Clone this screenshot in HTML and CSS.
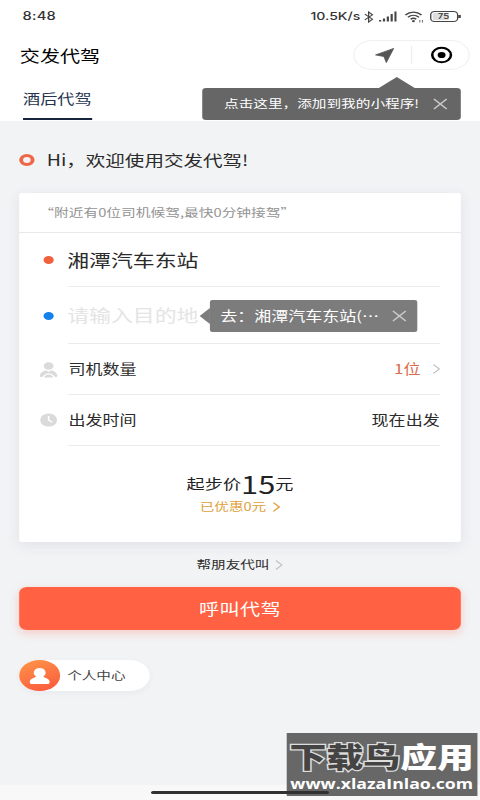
FILE: index.html
```html
<!DOCTYPE html>
<html lang="zh-CN">
<head>
<meta charset="utf-8">
<title>交发代驾</title>
<link rel="stylesheet" href="styles.css">
</head>
<body>
<div class="screen">
  <header class="top">
    <div class="status">
      <span class="clock">8:48</span>
      <div class="status-right">
        <span class="speed">10.5K/s</span>
        <svg class="bt" viewBox="0 0 8 12"><path d="M1 3.2l6 5L4 11V1l3 2.8-6 5"/></svg>
        <svg class="signal" viewBox="0 0 14 11"><path d="M1 9v1.500M4 7.500v3M7 5.500v5M10 3v7.500M13 .5v10"/></svg>
        <svg class="wifi" viewBox="0 0 15 12"><path d="M.7 4C4.500.2 9.500.2 13.300 4M2.700 6.200c2.600-2.500 6-2.500 8.600 0M4.800 8.300c1.400-1.300 3-1.300 4.400 0"/><circle cx="7" cy="10.200" r="1.100"/><path class="thin" d="M12 9v2.500M14 9v2.500"/></svg>
        <span class="battery">75</span>
      </div>
    </div>
    <div class="nav">
      <h1>交发代驾</h1>
      <div class="capsule">
        <svg class="arrow" viewBox="0 0 15 15"><path d="M.4 6.900L14.600.4 8.800 14.600 6.900 8.500z"/></svg>
        <i class="split"></i>
        <svg class="target" viewBox="0 0 18 18"><circle class="ring" cx="9" cy="9" r="7.300"/><circle cx="9" cy="9" r="3.100"/></svg>
      </div>
    </div>
    <div class="tabs"><span class="tab">酒后代驾</span></div>
    <div class="tip"><span>点击这里，添加到我的小程序!</span><svg class="x" viewBox="0 0 12 12"><path d="M1 1l10 10M11 1L1 11"/></svg></div>
  </header>

  <main>
    <div class="hello"><i class="ring-dot"></i><span>Hi，欢迎使用交发代驾!</span></div>
    <section class="card">
      <p class="notice">“附近有0位司机候驾,最快0分钟接驾”</p>
      <div class="row from"><i class="dot"></i><div class="cell big">湘潭汽车东站</div></div>
      <div class="row to"><i class="dot blue"></i><div class="cell big hint">请输入目的地</div>
        <div class="dest"><span>去：湘潭汽车东站(…</span><svg class="x" viewBox="0 0 12 12"><path d="M1 1l10 10M11 1L1 11"/></svg></div>
      </div>
      <div class="row count">
        <svg class="ico" viewBox="0 0 14 16"><circle cx="7" cy="4" r="3.800"/><path d="M0 13.500C1 10 3 8.500 5 8.500l2 1.300 2-1.300c2 0 4 1.500 5 5 .2 1.500-1.400 2-2.300 1C10 12 8.500 11.300 7 11.300s-3 .7-4.700 3.200c-.9 1-2.500.5-2.300-1z"/><path d="M3.500 15.500c.5-4 6.500-4 7 0z"/></svg>
        <div class="cell"><span>司机数量</span><span class="num">1位</span><svg class="chev" viewBox="0 0 6 10"><path d="M.6.6L5.200 5 .6 9.400"/></svg></div>
      </div>
      <div class="row time">
        <svg class="ico clock-ico" viewBox="0 0 14 14"><circle cx="7" cy="7" r="6.600"/><path d="M7 3v4l2.800 2.200"/></svg>
        <div class="cell"><span>出发时间</span><span class="now">现在出发</span></div>
      </div>
      <div class="price"><span>起步价</span><b>15</b><span>元</span></div>
      <div class="saved"><span>已优惠0元</span><svg class="chev" viewBox="0 0 6 10"><path d="M.6.6L5.200 5 .6 9.400"/></svg></div>
    </section>
    <div class="friend"><span>帮朋友代叫</span><svg class="chev" viewBox="0 0 6 10"><path d="M.6.6L5.200 5 .6 9.400"/></svg></div>
    <button class="call">呼叫代驾</button>
    <div class="me">
      <span class="avatar"><svg viewBox="0 0 16 16"><path d="M8 0a4.700 4.700 0 0 1 2.800 8.400c.2.900 4.700 1.800 5 5.300.1 1.400-.6 2.300-2 2.300H2.200c-1.400 0-2.100-.9-2-2.300.3-3.500 4.800-4.400 5-5.300A4.700 4.700 0 0 1 8 0z"/></svg></span>
      <span>个人中心</span>
    </div>
  </main>
  <div class="mark">
    <div class="mark-name"><span class="dark">下载鸟</span><span>应用</span></div>
    <div class="mark-url">www.xlazaInlao.com</div>
  </div>
  <div class="home"></div>
</div>
</body>
</html>
```
FILE: styles.css
```css
* { box-sizing: border-box; }
body { margin: 0; overflow: hidden; background: #f2f3f5; }
/* 375-unit wide layout widened to fill the 480px viewport */
.screen {
  position: relative;
  width: 375px;
  height: 800px;
  transform: scaleX(1.28);
  transform-origin: 0 0;
  background: linear-gradient(#f2f3f5 785px, #f8f8f8 785px);
  color: #2b2b2b;
  font-family: "Noto Sans CJK SC", sans-serif;
  font-size: 13.3px;
  line-height: 1;
}
svg { display: block; flex: none; }
i { flex: none; }
.top { position: relative; height: 121px; background: #fff; }
.status { display: flex; justify-content: space-between; height: 33px; padding: 0 15.500px 0 17.500px; align-items: center; font-family: Inter, "Noto Sans", sans-serif; font-weight: 500; font-size: 11.500px; color: #333; }
.clock { letter-spacing: .2px; }
.status-right { display: flex; align-items: center; }
.speed { font-size: 11px; margin-right: 2px; }
.bt, .signal, .wifi { fill: none; stroke: #444; }
.bt { width: 8px; height: 12px; margin-right: 4px; }
.signal { width: 14px; height: 11px; stroke-width: 1.700; margin-right: 6px; }
.wifi { width: 15px; height: 12px; stroke-width: 1.300; margin-right: 5px; }
.wifi circle { fill: #444; stroke: none; }
.wifi .thin { stroke-width: .7; }
.battery { position: relative; width: 22px; height: 11px; border: 1px solid #444; border-radius: 3.500px; font-size: 7.500px; line-height: 9px; text-align: center; background: linear-gradient(90deg, #ddd 70%, #fff 70%); box-shadow: inset 0 0 0 1px #fff; margin-right: 2px; }
.battery::after { content: ""; position: absolute; right: -3px; top: 3px; width: 1.500px; height: 3px; background: #444; }
.nav { display: flex; justify-content: space-between; align-items: center; height: 44px; padding: 0 8.500px 0 15.500px; }
h1 { margin: 0; padding-top: 1px; font-size: 15.700px; font-weight: 400; color: #000; }
.capsule { display: flex; align-items: center; width: 91px; height: 30px; border: 1px solid #f0f0f0; border-radius: 15px; padding-left: 16px; }
.arrow { width: 15px; height: 15px; fill: #555; stroke: #555; stroke-width: .7; stroke-linejoin: round; }
.split { width: 1px; height: 18px; background: #eee; margin: 0 14px 0 13px; }
.target { width: 18px; height: 18px; }
.target .ring { fill: none; stroke: #000; stroke-width: 2; }
.tabs { display: flex; padding-left: 18px; }
.tab { height: 43px; padding-top: 15px; font-size: 13.400px; color: #26344d; border-bottom: 2px solid #16243c; }
.x { fill: none; stroke: #ccc; stroke-width: 1.100; width: 12px; height: 12px; }
.tip { position: absolute; left: 157.500px; top: 88px; width: 202.500px; height: 32px; padding-left: 17.500px; display: flex; align-items: center; background: #666; border-radius: 3px; color: #fff; font-size: 11.450px; white-space: nowrap; }
.tip .x { position: absolute; right: 10px; }
.tip::before { content: ""; position: absolute; left: 138px; top: -11px; border: solid transparent; border-width: 0 14px 11px; border-bottom-color: #666; }
main { padding: 0 15px; }
.hello { display: flex; align-items: center; height: 72px; padding-top: 6px; font-size: 15.250px; }
.ring-dot { width: 12px; height: 12px; border: 3.500px solid #ee6547; border-radius: 50%; margin-right: 9.500px; }
.card { height: 349px; background: #fff; border-radius: 2px; box-shadow: 0 3px 12px rgba(40,50,80,.09); }
.notice { margin: 0; height: 40px; padding-left: 15.700px; line-height: 39px; font-size: 11.500px; color: #949494; border-bottom: 1px solid #e8e8e8; }
.row { position: relative; display: flex; align-items: center; padding: 0 16.500px 0 16px; }
.cell { flex: 1; display: flex; align-items: center; height: 100%; border-bottom: 1px solid #ebebeb; }
.big { font-size: 17.100px; }
.hint { color: #e4e4e4; }
.from { height: 54px; }
.to { height: 57px; }
.count, .time { height: 51px; }
.dot { width: 8px; height: 8px; margin: 0 11px 0 2.500px; border-radius: 50%; background: #f0603a; }
.blue { background: #1681ea; }
.dest { position: absolute; left: 149px; top: 13px; width: 162px; height: 32px; padding-left: 8px; display: flex; align-items: center; background: #7c7c7c; border-radius: 2px; color: #fff; font-size: 13.300px; white-space: nowrap; }
.dest .x { position: absolute; right: 8.500px; }
.dest::before { content: ""; position: absolute; left: -8px; top: 8px; border: solid transparent; border-width: 8px 8px 8px 0; border-right-color: #7c7c7c; }
.ico { width: 14px; height: 16px; fill: #dadada; margin-right: 7.500px; }
.count .cell, .time .cell { padding-left: 1px; }
.time .cell { padding-bottom: 1px; }
.time .clock-ico { margin-top: -2px; }
.clock-ico path { fill: none; stroke: #fff; stroke-width: 1.300; }
.num { margin-left: auto; color: #dc6c4c; }
.chev { width: 6px; height: 10px; fill: none; stroke: #bbb; stroke-width: 1; }
.num + .chev { margin-left: 9px; }
.now { margin-left: auto; }
.price { display: flex; justify-content: center; align-items: center; height: 28px; margin-top: 24px; font-size: 14.200px; color: #222; }
.price span { padding-bottom: 2px; }
.price b { font-weight: 400; font-size: 24px; }
.saved { display: flex; justify-content: center; align-items: center; margin-top: 3px; font-size: 11.400px; color: #e0a03c; }
.saved .chev { stroke: #e0a03c; stroke-width: 1.200; margin-left: 5px; }
.friend { display: flex; justify-content: center; align-items: center; height: 45px; font-size: 11.400px; }
.friend .chev { margin-left: 5px; }
.call { display: block; width: 100%; height: 43px; padding: 0; border: 0; border-radius: 6px; background: #ff6142; color: #fff; font: 15.700px "Noto Sans CJK SC", sans-serif; letter-spacing: .3px; box-shadow: 0 3px 8px rgba(255,97,66,.28); }
.me { display: flex; align-items: center; width: 102px; height: 31px; margin-top: 30px; border-radius: 16px; background: #fff; font-size: 11.400px; color: #444; box-shadow: 0 2px 6px rgba(40,50,80,.05); }
.avatar { display: flex; align-items: center; justify-content: center; width: 31.500px; height: 31px; margin-right: 6px; border-radius: 50%; background: linear-gradient(160deg, #fd9648, #fb573d); }
.avatar svg { width: 16px; height: 16px; fill: #fff; }
.home { position: absolute; left: 118px; bottom: 6px; width: 139px; height: 3px; border-radius: 2px; background: #303030; }
.mark { position: absolute; left: 223.500px; top: 733px; width: 149.500px; height: 63px; background: #676767; color: #fff; text-align: center; white-space: nowrap; }
.mark-name { display: flex; justify-content: center; padding-top: 9px; font-size: 28.800px; line-height: 28px; font-weight: 900; }
.mark-name .dark { color: #444; -webkit-text-stroke: 2.500px #ddd; paint-order: stroke fill; }
.mark-url { margin-top: 6px; font: 700 13.800px/16px "Open Sans", sans-serif; }
```
